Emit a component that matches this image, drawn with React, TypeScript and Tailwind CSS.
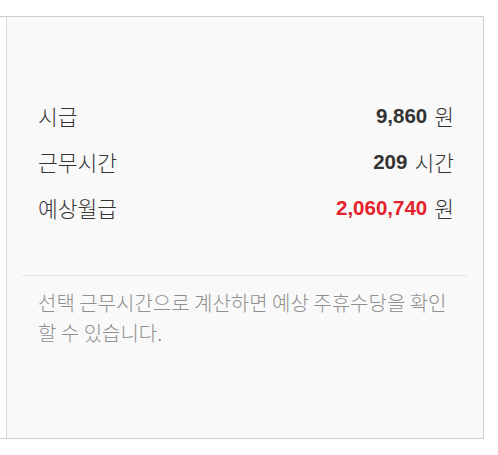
const rows = [
  { label: '시급', value: '9,860', unit: '원', red: false },
  { label: '근무시간', value: '209', unit: '시간', red: false },
  { label: '예상월급', value: '2,060,740', unit: '원', red: true },
];

const kr = "font-['Noto_Sans_CJK_KR',sans-serif]";

export default function App() {
  return (
    <div className="bg-white min-h-[455px] pt-4">
      <div className="flex w-[484px] h-[423px] border-y border-r border-[#cccccc]">
        <div className="w-[6px] bg-white" />
        <div className="flex-1 border-l border-[#dddddd] bg-[#f9f9f9] px-[15px] pt-[76px]">
          <div className="pl-4 pr-[14px]">
            {rows.map((r) => (
              <div key={r.label} className="flex items-center justify-between h-[46px]">
                <span className={`${kr} text-[21.5px] font-light text-[#333]`}>{r.label}</span>
                <span className="flex items-center">
                  <span
                    className={`font-['Liberation_Sans',sans-serif] font-bold text-[20.5px] ${
                      r.red ? 'text-[#e5212c]' : 'text-[#333]'
                    }`}
                  >
                    {r.value}
                  </span>
                  <span className={`${kr} text-[21.5px] font-light text-[#333] ml-[7px]`}>{r.unit}</span>
                </span>
              </div>
            ))}
          </div>
          <div className="mt-[44px] border-t border-[#e5e5e5]" />
          <p className={`${kr} pl-4 pr-[12px] mt-[12px] text-[20px] font-light leading-[30px] text-[#8f8f8f]`}>
            선택 근무시간으로 계산하면 예상 주휴수당을 확인 할 수 있습니다.
          </p>
        </div>
      </div>
    </div>
  );
}
